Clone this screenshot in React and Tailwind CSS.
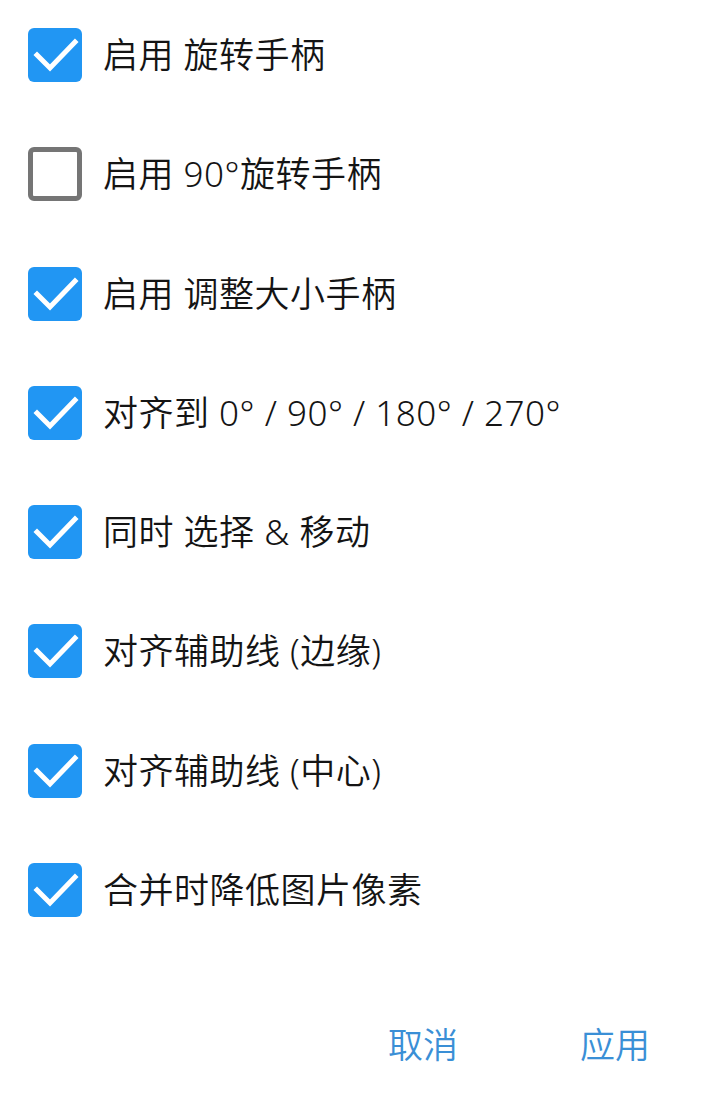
import React, { useState } from "react";

const options = [
  { label: "启用 旋转手柄", on: true },
  { label: "启用 90°旋转手柄", on: false },
  { label: "启用 调整大小手柄", on: true },
  { label: "对齐到 0° / 90° / 180° / 270°", on: true },
  { label: "同时 选择 & 移动", on: true },
  { label: "对齐辅助线 (边缘)", on: true },
  { label: "对齐辅助线 (中心)", on: true },
  { label: "合并时降低图片像素", on: true },
];

const Box = ({ checked }) =>
  checked ? (
    <div className="w-[54px] h-[54px] rounded-[6px] bg-[#2196f3] flex items-center justify-center shrink-0">
      <svg width="54" height="54" viewBox="0 0 54 54">
        <path d="M9 27 L22 40 L47 14" fill="none" stroke="#fff" strokeWidth="5" strokeLinecap="square" />
      </svg>
    </div>
  ) : (
    <div className="w-[54px] h-[54px] rounded-[6px] border-[5px] border-[#757575] bg-white shrink-0" />
  );

const App = () => {
  const [items, setItems] = useState(options);

  const toggle = (i) =>
    setItems(items.map((it, idx) => (idx === i ? { ...it, on: !it.on } : it)));

  return (
    <div
      className="w-[720px] h-[1113px] bg-white text-black"
      style={{ fontFamily: '"Noto Sans", "Noto Sans CJK SC", sans-serif' }}
    >
      <div className="flex flex-col gap-[65.3px] pt-[28px] pl-[28px]">
        {items.map((it, i) => (
          <div key={i} className="flex items-center gap-[21px] h-[54px] cursor-pointer" onClick={() => toggle(i)}>
            <Box checked={it.on} />
            <span className="text-[35px] leading-none text-[#141414] font-[350] tracking-[0.5px] pb-[1px]">{it.label}</span>
          </div>
        ))}
      </div>
      <div className="flex justify-end gap-[122px] pr-[70px] mt-[110px]">
        <button className="text-[35px] leading-none text-[#3a8fd6] font-[350]">取消</button>
        <button className="text-[35px] leading-none text-[#3a8fd6] font-[350]">应用</button>
      </div>
    </div>
  );
};

export default App;
